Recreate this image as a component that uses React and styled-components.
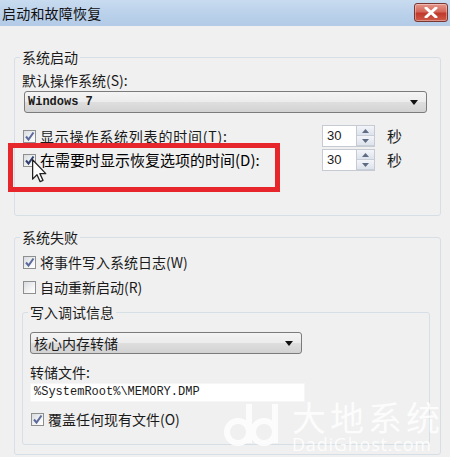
import React from "react";
import styled, { createGlobalStyle } from "styled-components";

const CJK = `"Noto Sans CJK SC", "Noto Sans", sans-serif`;
const MONO = `"Liberation Mono", "DejaVu Sans Mono", monospace`;

export default function App() {
  return (
    <Window>
      <GlobalStyle />
      <TitleBar>
        <Title>启动和故障恢复</Title>
        <CloseButton>
          <svg width="14" height="11" viewBox="0 0 14 11">
            <path d="M2 1 L12 10 M12 1 L2 10" stroke="#fff" strokeWidth="3" strokeLinecap="round" />
          </svg>
        </CloseButton>
      </TitleBar>

      <Body>
        <Group $mt={21} $pr={13} $pb={43}>
          <Legend>系统启动</Legend>
          <Label $mt={3}>默认操作系统(S):</Label>
          <Select $mt={1} $ml={4}>
            <SelectText $mono>Windows 7</SelectText>
            <Arrow />
          </Select>
          <TimeRow $mt={11}>
            <CheckLabel $spread>
              <CheckBox checked />
              显示操作系统列表的时间(T):
            </CheckLabel>
            <Spinner value="30" />
            <Unit>秒</Unit>
          </TimeRow>
          <TimeRow>
            <CheckLabel>
              <CheckBox checked dark />
              <strong>在需要时显示恢复选项的时间(D):</strong>
            </CheckLabel>
            <Spinner value="30" />
            <Unit>秒</Unit>
            <Highlight />
            <Cursor width="15" height="24" viewBox="0 0 12 19">
              <path
                d="M0.5 0.5 L0.5 16 L4 12.5 L6.5 18 L8.8 17 L6.3 11.6 L11 11.6 Z"
                fill="#fff"
                stroke="#222"
                strokeWidth="1"
                strokeLinejoin="round"
              />
            </Cursor>
          </TimeRow>
        </Group>

        <Group $mt={11} $pr={10} $pb={9}>
          <Legend>系统失败</Legend>
          <CheckRow $mt={4}>
            <CheckBox checked />
            将事件写入系统日志(W)
          </CheckRow>
          <CheckRow $mt={3}>
            <CheckBox />
            自动重新启动(R)
          </CheckRow>
          <InnerGroup>
            <Legend>写入调试信息</Legend>
            <Select $mt={10} $ml={2} $w={272}>
              <SelectText>核心内存转储</SelectText>
              <Arrow />
            </Select>
            <Label $mt={8}>转储文件:</Label>
            <TextInput>%SystemRoot%\MEMORY.DMP</TextInput>
            <CheckRow $mt={6}>
              <CheckBox checked />
              覆盖任何现有文件(O)
            </CheckRow>
          </InnerGroup>
        </Group>
      </Body>

      <Watermark>
        <svg width="60" height="48" viewBox="0 0 60 48">
          <g fill="none" stroke="#fff" strokeWidth="6">
            <circle cx="14" cy="32" r="11" />
            <circle cx="40" cy="32" r="11" />
            <path d="M25 4 V43 M51 4 V43" />
          </g>
        </svg>
        <MarkText>
          <MarkBig>大地系统</MarkBig>
          <MarkSmall>DadiGhost.com</MarkSmall>
        </MarkText>
      </Watermark>
    </Window>
  );
}

function CheckBox({ checked, dark }) {
  return (
    <Box>
      {checked && (
        <svg width="11" height="11" viewBox="0 0 11 11">
          <path
            d="M2 5.5 L4.5 8.5 L9.5 1.5"
            fill="none"
            stroke={dark ? "#2f3f6e" : "#5a6a9c"}
            strokeWidth="2"
          />
        </svg>
      )}
    </Box>
  );
}

function Spinner({ value }) {
  return (
    <SpinWrap>
      <SpinValue>{value}</SpinValue>
      <SpinButtons>
        <SpinButton>
          <svg width="7" height="4" viewBox="0 0 7 4">
            <path d="M0 4 L3.5 0 L7 4 Z" fill="#5d6b83" />
          </svg>
        </SpinButton>
        <SpinButton>
          <svg width="7" height="4" viewBox="0 0 7 4">
            <path d="M0 0 L3.5 4 L7 0 Z" fill="#5d6b83" />
          </svg>
        </SpinButton>
      </SpinButtons>
    </SpinWrap>
  );
}

const GlobalStyle = createGlobalStyle`
  html, body {
    margin: 0;
    padding: 0;
    background: #f0f0f0;
  }
  * {
    box-sizing: border-box;
  }
`;

const Window = styled.div`
  position: relative;
  width: 450px;
  height: 457px;
  overflow: hidden;
  background: #f0f0f0;
  font-family: ${CJK};
  font-size: 14px;
  color: #1a1a1a;
`;

const TitleBar = styled.div`
  height: 26px;
  display: flex;
  align-items: center;
  justify-content: space-between;
  padding: 0 2px 0 2px;
  background: linear-gradient(180deg, #c8dbef 0%, #b9d0ea 60%, #b3cbe7 100%);
`;

const Title = styled.div`
  font-size: 14px;
  line-height: 20px;
  color: #111;
  letter-spacing: 0.2px;
`;

const CloseButton = styled.div`
  width: 34px;
  height: 19px;
  margin-top: -2px;
  display: flex;
  align-items: center;
  justify-content: center;
  border: 1px solid #7a3630;
  border-radius: 3px;
  background: linear-gradient(180deg, #e6968a 0%, #d3685a 45%, #c0392b 55%, #cf5a48 100%);
  box-shadow: inset 0 0 0 1px rgba(255, 255, 255, 0.35);
`;

const Body = styled.div`
  padding: 0 9px 0 14px;
  display: flex;
  flex-direction: column;
`;

const Group = styled.fieldset`
  margin: ${(p) => p.$mt}px 0 0;
  padding: 0 ${(p) => p.$pr}px ${(p) => p.$pb}px 5px;
  border: 1px solid #d5dfe5;
  border-radius: 3px;
  min-width: 0;
  display: flex;
  flex-direction: column;
`;

const InnerGroup = styled(Group)`
  margin: 4px 0 0 2px;
  padding: 0 7px 14px 5px;
`;

const Legend = styled.legend`
  padding: 0 2px;
  font-size: 14px;
  line-height: 20px;
  height: 20px;
`;

const Label = styled.div`
  margin: ${(p) => p.$mt || 0}px 0 0 2px;
  height: 20px;
  line-height: 20px;
`;

const Select = styled.div`
  margin: ${(p) => p.$mt || 0}px 0 0 ${(p) => p.$ml || 0}px;
  width: ${(p) => (p.$w ? `${p.$w}px` : "auto")};
  height: 22px;
  display: flex;
  align-items: center;
  justify-content: space-between;
  padding: 0 8px 0 3px;
  border: 1px solid #7b7b7b;
  border-radius: 3px;
  background: linear-gradient(180deg, #f4f4f4 0%, #ececec 48%, #dedede 52%, #d2d2d2 100%);
`;

const SelectText = styled.span`
  font-family: ${(p) => (p.$mono ? MONO : CJK)};
  font-size: ${(p) => (p.$mono ? 12 : 14)}px;
  font-weight: ${(p) => (p.$mono ? 700 : 400)};
  line-height: 20px;
`;

const Arrow = styled.span`
  width: 0;
  height: 0;
  border-left: 4px solid transparent;
  border-right: 4px solid transparent;
  border-top: 5px solid #111;
`;

const TimeRow = styled.div`
  position: relative;
  margin-top: ${(p) => p.$mt || 0}px;
  margin-left: 3px;
  height: 24px;
  display: grid;
  grid-template-columns: 1fr auto auto;
  align-items: center;
`;

const CheckLabel = styled.div`
  display: flex;
  align-items: center;
  gap: 4px;
  line-height: 20px;
  letter-spacing: ${(p) => (p.$spread ? "0.8px" : "0")};

  strong {
    font-weight: 400;
    font-size: 15px;
    color: #000;
  }
`;

const CheckRow = styled.div`
  margin: ${(p) => p.$mt || 0}px 0 0 3px;
  height: 22px;
  display: flex;
  align-items: center;
  gap: 4px;
  line-height: 20px;
`;

const Box = styled.span`
  flex: none;
  width: 13px;
  height: 13px;
  display: flex;
  align-items: center;
  justify-content: center;
  border: 1px solid #8e8f8f;
  background: linear-gradient(135deg, #d8dbe0 0%, #f4f4f4 60%, #ffffff 100%);
`;

const SpinWrap = styled.div`
  display: flex;
  width: 53px;
  height: 22px;
  border: 1px solid #c5cad3;
  background: #fff;
`;

const SpinValue = styled.div`
  flex: 1;
  padding-left: 4px;
  font-family: "Liberation Sans", Arial, sans-serif;
  font-size: 13px;
  line-height: 20px;
`;

const SpinButtons = styled.div`
  width: 18px;
  display: flex;
  flex-direction: column;
  border-left: 1px solid #c5cad3;
`;

const SpinButton = styled.div`
  flex: 1;
  display: flex;
  align-items: center;
  justify-content: center;
  background: linear-gradient(180deg, #f3f5f9 0%, #dde3ec 100%);
  border-bottom: 1px solid #c9cfd8;
`;

const Unit = styled.span`
  margin: 0 25px 0 12px;
  font-size: 15px;
  line-height: 20px;
`;

const Highlight = styled.div`
  position: absolute;
  left: -15px;
  top: -5px;
  width: 272px;
  height: 49px;
  border: 5px solid #e6262b;
  pointer-events: none;
`;

const Cursor = styled.svg`
  position: absolute;
  left: 9px;
  top: 11px;
`;

const TextInput = styled.div`
  margin: 1px 0 0 2px;
  width: 275px;
  height: 19px;
  padding-left: 3px;
  background: #fff;
  border: 1px solid #f6f6f6;
  font-family: ${MONO};
  font-size: 12px;
  line-height: 17px;
`;

const Watermark = styled.div`
  position: absolute;
  left: 224px;
  top: 400px;
  display: flex;
  align-items: flex-start;
  gap: 8px;
  opacity: 0.85;
  pointer-events: none;
`;

const MarkText = styled.div`
  display: flex;
  flex-direction: column;
  gap: 1px;
`;

const MarkBig = styled.span`
  font-family: ${CJK};
  font-size: 34px;
  line-height: 34px;
  height: 34px;
  letter-spacing: 4px;
  color: #fff;
`;

const MarkSmall = styled.span`
  font-family: "Open Sans", "Liberation Sans", sans-serif;
  font-size: 18px;
  line-height: 18px;
  color: #fff;
  letter-spacing: 0.8px;
  white-space: nowrap;
`;
